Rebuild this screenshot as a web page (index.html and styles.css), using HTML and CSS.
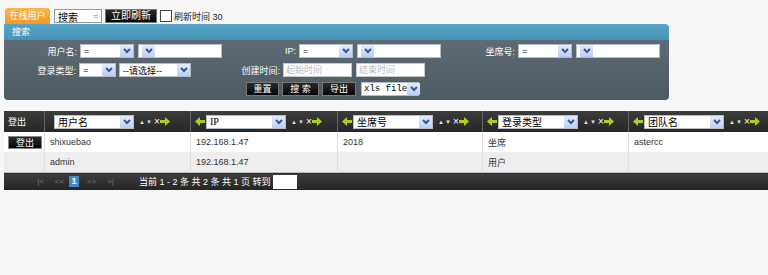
FILE: index.html
```html
<!DOCTYPE html>
<html lang="zh">
<head>
    <meta charset="UTF-8">
    <title>在线用户</title>
    <link rel="stylesheet" href="styles.css">
</head>
<body>
    <div class="topbar">
        <span class="tab">在线用户</span>
        <span class="sel sel-top">搜索 <span class="up">&#8776;</span></span>
        <button class="btn btn-refresh">立即刷新</button>
        <span class="chk"></span>
        <span class="chk-text">刷新时间 30</span>
    </div>

    <div class="panel">
        <div class="panel-head">搜索</div>
        <div class="panel-body">
            <div class="form-row">
                <div class="group">
                    <label>用户名:</label>
                    <span class="sel w54">=<span class="arr"><svg width="8" height="6"><polyline points="1,1 4,4 7,1" fill="none" stroke="#34589e" stroke-width="2"/></svg></span></span>
                    <span class="sel w84"><span class="arr"><svg width="8" height="6"><polyline points="1,1 4,4 7,1" fill="none" stroke="#34589e" stroke-width="2"/></svg></span></span>
                </div>
                <div class="group">
                    <label>IP:</label>
                    <span class="sel w54">=<span class="arr"><svg width="8" height="6"><polyline points="1,1 4,4 7,1" fill="none" stroke="#34589e" stroke-width="2"/></svg></span></span>
                    <span class="sel w84"><span class="arr"><svg width="8" height="6"><polyline points="1,1 4,4 7,1" fill="none" stroke="#34589e" stroke-width="2"/></svg></span></span>
                </div>
                <div class="group">
                    <label>坐席号:</label>
                    <span class="sel w54">=<span class="arr"><svg width="8" height="6"><polyline points="1,1 4,4 7,1" fill="none" stroke="#34589e" stroke-width="2"/></svg></span></span>
                    <span class="sel w84"><span class="arr"><svg width="8" height="6"><polyline points="1,1 4,4 7,1" fill="none" stroke="#34589e" stroke-width="2"/></svg></span></span>
                </div>
            </div>
            <div class="form-row">
                <div class="group">
                    <label class="lbl-type">登录类型:</label>
                    <span class="sel w37">=<span class="arr"><svg width="8" height="6"><polyline points="1,1 4,4 7,1" fill="none" stroke="#34589e" stroke-width="2"/></svg></span></span>
                    <span class="sel w72">--请选择--<span class="arr"><svg width="8" height="6"><polyline points="1,1 4,4 7,1" fill="none" stroke="#34589e" stroke-width="2"/></svg></span></span>
                </div>
                <div class="group">
                    <label class="lbl-time">创建时间:</label>
                    <input class="date" type="text" placeholder="起始时间">
                    <input class="date" type="text" placeholder="结束时间">
                </div>
            </div>
            <div class="form-row actions">
                <button class="btn w33">重置</button>
                <button class="btn w37b">搜 索</button>
                <button class="btn w34">导出</button>
                <span class="sel sel-file">xls file<span class="arr"><svg width="8" height="6"><polyline points="1,1 4,4 7,1" fill="none" stroke="#34589e" stroke-width="2"/></svg></span></span>
            </div>
        </div>
    </div>

    <table class="grid">
        <thead>
            <tr>
                <th class="c0">登出</th>
                <th class="c1"><div class="hcell">
                    <span class="sel hsel">用户名<span class="arr"><svg width="8" height="6"><polyline points="1,1 4,4 7,1" fill="none" stroke="#34589e" stroke-width="2"/></svg></span></span>
                    <span class="ico">&#9650;&#9660;</span><span class="x">&times;</span><svg class="ga" width="10" height="9"><polygon points="0,3 5,3 5,0 10,4.5 5,9 5,6 0,6" fill="#a8d020"/></svg>
                </div></th>
                <th class="c2"><div class="hcell">
                    <svg class="gl" width="10" height="9"><polygon points="10,3 5,3 5,0 0,4.5 5,9 5,6 10,6" fill="#a8d020"/></svg>
                    <span class="sel hsel serif">IP<span class="arr"><svg width="8" height="6"><polyline points="1,1 4,4 7,1" fill="none" stroke="#34589e" stroke-width="2"/></svg></span></span>
                    <span class="ico">&#9650;&#9660;</span><span class="x">&times;</span><svg class="ga" width="10" height="9"><polygon points="0,3 5,3 5,0 10,4.5 5,9 5,6 0,6" fill="#a8d020"/></svg>
                </div></th>
                <th class="c3"><div class="hcell">
                    <svg class="gl" width="10" height="9"><polygon points="10,3 5,3 5,0 0,4.5 5,9 5,6 10,6" fill="#a8d020"/></svg>
                    <span class="sel hsel">坐席号<span class="arr"><svg width="8" height="6"><polyline points="1,1 4,4 7,1" fill="none" stroke="#34589e" stroke-width="2"/></svg></span></span>
                    <span class="ico">&#9650;&#9660;</span><span class="x">&times;</span><svg class="ga" width="10" height="9"><polygon points="0,3 5,3 5,0 10,4.5 5,9 5,6 0,6" fill="#a8d020"/></svg>
                </div></th>
                <th class="c4"><div class="hcell">
                    <svg class="gl" width="10" height="9"><polygon points="10,3 5,3 5,0 0,4.5 5,9 5,6 10,6" fill="#a8d020"/></svg>
                    <span class="sel hsel">登录类型<span class="arr"><svg width="8" height="6"><polyline points="1,1 4,4 7,1" fill="none" stroke="#34589e" stroke-width="2"/></svg></span></span>
                    <span class="ico">&#9650;&#9660;</span><span class="x">&times;</span><svg class="ga" width="10" height="9"><polygon points="0,3 5,3 5,0 10,4.5 5,9 5,6 0,6" fill="#a8d020"/></svg>
                </div></th>
                <th class="c5"><div class="hcell">
                    <svg class="gl" width="10" height="9"><polygon points="10,3 5,3 5,0 0,4.5 5,9 5,6 10,6" fill="#a8d020"/></svg>
                    <span class="sel hsel">团队名<span class="arr"><svg width="8" height="6"><polyline points="1,1 4,4 7,1" fill="none" stroke="#34589e" stroke-width="2"/></svg></span></span>
                    <span class="ico">&#9650;&#9660;</span><span class="x">&times;</span><svg class="ga" width="10" height="9"><polygon points="0,3 5,3 5,0 10,4.5 5,9 5,6 0,6" fill="#a8d020"/></svg>
                </div></th>
            </tr>
        </thead>
        <tbody>
            <tr>
                <td class="c0"><button class="btn btn-logout">登出</button></td>
                <td>shixuebao</td>
                <td>192.168.1.47</td>
                <td>2018</td>
                <td>坐席</td>
                <td>astercc</td>
            </tr>
            <tr class="alt">
                <td class="c0"></td>
                <td>admin</td>
                <td>192.168.1.47</td>
                <td></td>
                <td>用户</td>
                <td></td>
            </tr>
        </tbody>
        <tfoot>
            <tr>
                <td colspan="6">
                    <div class="pager">
                        <span class="pg">|&lt;</span>
                        <span class="pg">&lt;&lt;</span>
                        <span class="pg-cur">1</span>
                        <span class="pg">&gt;&gt;</span>
                        <span class="pg">&gt;|</span>
                        <span class="pg-info">当前 1 - 2 条 共 2 条 共 1 页 转到</span>
                        <input class="pg-input" type="text">
                    </div>
                </td>
            </tr>
        </tfoot>
    </table>
</body>
</html>
```

FILE: styles.css
```css
body {
    margin: 0;
    padding: 8px 0 0 4px;
    background: #f7f7f7;
    font-family: Arial, "Liberation Sans", "Noto Sans CJK SC", sans-serif;
    font-size: 9px;
    color: #333;
}
.topbar {
    display: flex;
    align-items: center;
    height: 16px;
}
.tab {
    width: 45px;
    height: 16px;
    margin-left: 1px;
    background: linear-gradient(#fcb54c, #f49a22);
    color: #fff;
    text-align: center;
    line-height: 16px;
    border-radius: 3px 3px 0 0;
}
.btn {
    font-family: Arial, "Liberation Sans", "Noto Sans CJK SC", sans-serif;
    font-size: 9px;
    color: #fff;
    background: linear-gradient(#2a2a2a, #050505);
    border: 1px solid #777;
    padding: 0;
    height: 14px;
    line-height: 12px;
    cursor: pointer;
}
.btn-refresh {
    width: 52px;
    margin-left: 3px;
    font-size: 10px;
}
.chk {
    width: 10px;
    height: 10px;
    border: 1px solid #444;
    background: #fff;
    margin-left: 3px;
}
.chk-text {
    margin-left: 2px;
    color: #222;
}
.sel {
    display: inline-flex;
    align-items: center;
    justify-content: space-between;
    box-sizing: border-box;
    height: 14px;
    background: #fff;
    border: 1px solid #b5bcc6;
    padding-left: 3px;
    color: #000;
    font-size: 9px;
    white-space: nowrap;
}
.sel .arr {
    width: 13px;
    height: 12px;
    flex-shrink: 0;
    display: flex;
    align-items: center;
    justify-content: center;
    background: linear-gradient(#e4ecfb, #bccff2);
}
.sel-top {
    width: 48px;
    margin-left: 4px;
    border-color: #999;
    font-size: 10px;
}
.sel-top .up {
    color: #888;
    margin-right: 3px;
    font-size: 8px;
}
.panel {
    width: 665px;
    border-radius: 0 4px 4px 4px;
    overflow: hidden;
}
.panel-head {
    height: 16px;
    line-height: 16px;
    padding-left: 8px;
    background: linear-gradient(#56a5c8, #4793b6);
    color: #fff;
}
.panel-body {
    background: linear-gradient(#5e6b74, #4e5a62);
    padding: 4px 0;
    height: 52px;
}
.form-row {
    display: flex;
    align-items: center;
    height: 14px;
    margin-bottom: 5px;
}
.group {
    display: flex;
    align-items: center;
    width: 219px;
    gap: 3px;
}
.group label {
    width: 73px;
    text-align: right;
    color: #fff;
}
.group .lbl-type {
    width: 72px;
}
.group .lbl-time {
    width: 57px;
}
.w54 { width: 54px; }
.w84 { width: 84px; margin-left: 1px; }
.w37 { width: 37px; }
.w72 { width: 72px; }
.date {
    box-sizing: border-box;
    width: 69px;
    height: 14px;
    border: 1px solid #c8c8c8;
    padding: 0 2px;
    margin: 0;
    font-family: Arial, "Liberation Sans", "Noto Sans CJK SC", sans-serif;
    font-size: 9px;
}
.date + .date {
    margin-left: 1px;
}
.date::placeholder {
    color: #bbb;
}
.actions {
    padding-left: 242px;
    gap: 3px;
}
.w33 { width: 33px; }
.w37b { width: 37px; }
.w34 { width: 34px; }
.sel-file {
    width: 58px;
    margin-left: 2px;
    font-family: "Liberation Mono", "DejaVu Sans Mono", monospace;
    font-size: 9px;
    padding-left: 2px;
}
.grid {
    margin-top: 11px;
    width: 772px;
    border-collapse: collapse;
    table-layout: fixed;
}
.grid th {
    height: 21px;
    padding: 0;
    background: linear-gradient(#3c3c3c, #262626);
    color: #fff;
    font-weight: normal;
    text-align: left;
    border-left: 1px solid #666;
}
.grid th.c0 {
    padding-left: 4px;
    border-left: none;
}
.c0 { width: 36px; }
.c1 { width: 145px; }
.c2 { width: 146px; }
.c3 { width: 144px; }
.c4 { width: 145px; }
.hcell {
    display: flex;
    align-items: center;
    padding-left: 4px;
}
.c1 .hcell {
    padding-left: 9px;
}
.hsel {
    width: 80px;
    height: 14px;
    font-size: 10px;
    font-family: "Noto Sans CJK SC", sans-serif;
}
.hsel.serif {
    font-family: "Liberation Serif", serif;
}
.gl {
    margin-right: 1px;
    width: 10px;
}
.ico {
    margin-left: 5px;
    font-size: 6px;
    letter-spacing: 1px;
    color: #ddd;
}
.x {
    font-size: 10px;
    color: #fff;
    margin-left: 1px;
}
.grid td {
    height: 20px;
    padding: 0 0 0 5px;
    background: #fff;
    color: #333;
    border-left: 1px solid #ddd;
}
.grid td.c0 {
    border-left: none;
    padding-left: 4px;
}
.grid tr.alt td {
    background: #eeeeee;
}
.btn-logout {
    width: 34px;
    height: 13px;
    border-color: #888;
}
.grid tfoot td {
    height: 17px;
    padding: 0;
    border-left: none;
    border-top: 1px solid #bbb;
    background: linear-gradient(#3d3d3d, #242424);
}
.pager {
    display: flex;
    align-items: center;
    padding-left: 27px;
    color: #fff;
}
.pg {
    color: #777;
    font-size: 8px;
    width: 19px;
    text-align: center;
}
.pg-cur {
    width: 10px;
    height: 11px;
    margin: 0 3px 0 0;
    background: #3e8cc0;
    color: #fff;
    text-align: center;
    line-height: 11px;
    font-size: 9px;
    font-weight: bold;
}
.pg-info {
    margin-left: 19px;
}
.pg-input {
    box-sizing: border-box;
    width: 24px;
    height: 14px;
    margin-left: 2px;
    border: none;
    padding: 0;
}
```
